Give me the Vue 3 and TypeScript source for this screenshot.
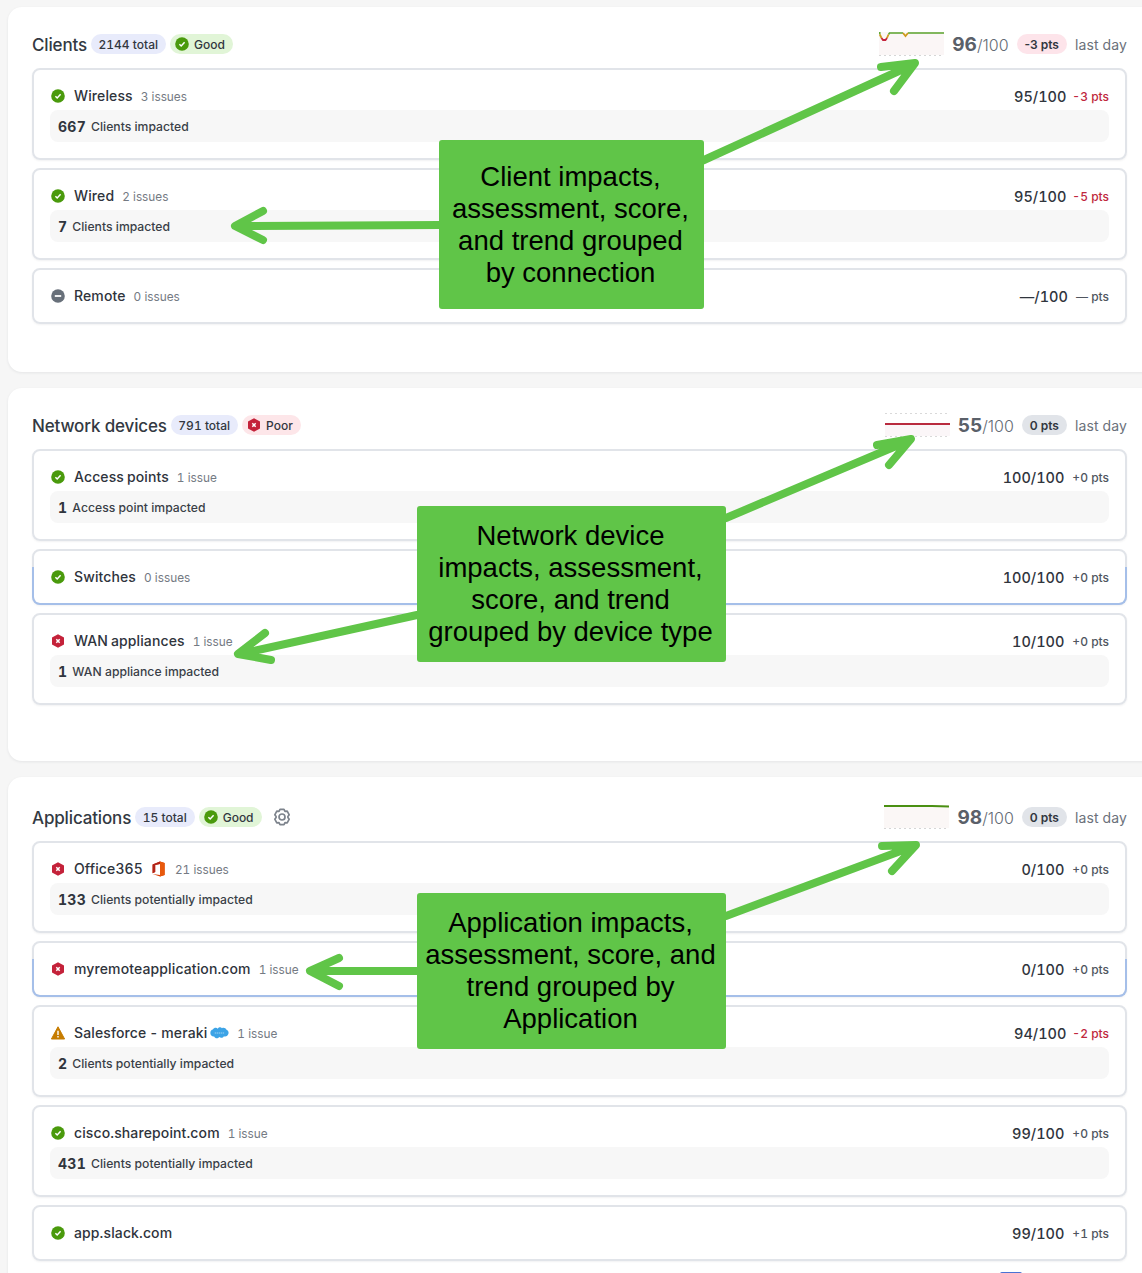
<script setup lang="ts">
type Status = 'good' | 'poor' | 'warn' | 'none';

interface Row {
  name: string;
  status: Status;
  issues: string;
  score: string;
  pts: string;
  ptsBad?: boolean;
  impactNum?: string;
  impactText?: string;
  brand?: 'office' | 'salesforce';
  focused?: boolean;
}

interface Section {
  title: string;
  total: string;
  status: 'good' | 'poor';
  score: string;
  change: string;
  changeBad?: boolean;
  trend: 'clients' | 'devices' | 'apps';
  gear?: boolean;
  tail: number;
  rows: Row[];
}

const sections: Section[] = [
  {
    title: 'Clients',
    total: '2144 total',
    status: 'good',
    score: '96',
    change: '-3 pts',
    changeBad: true,
    trend: 'clients',
    tail: 48,
    rows: [
      { name: 'Wireless', status: 'good', issues: '3 issues', score: '95/100', pts: '-3 pts', ptsBad: true, impactNum: '667', impactText: 'Clients impacted' },
      { name: 'Wired', status: 'good', issues: '2 issues', score: '95/100', pts: '-5 pts', ptsBad: true, impactNum: '7', impactText: 'Clients impacted' },
      { name: 'Remote', status: 'none', issues: '0 issues', score: '—/100', pts: '— pts' },
    ],
  },
  {
    title: 'Network devices',
    total: '791 total',
    status: 'poor',
    score: '55',
    change: '0 pts',
    trend: 'devices',
    tail: 56,
    rows: [
      { name: 'Access points', status: 'good', issues: '1 issue', score: '100/100', pts: '+0 pts', impactNum: '1', impactText: 'Access point impacted' },
      { name: 'Switches', status: 'good', issues: '0 issues', score: '100/100', pts: '+0 pts', focused: true },
      { name: 'WAN appliances', status: 'poor', issues: '1 issue', score: '10/100', pts: '+0 pts', impactNum: '1', impactText: 'WAN appliance impacted' },
    ],
  },
  {
    title: 'Applications',
    total: '15 total',
    status: 'good',
    score: '98',
    change: '0 pts',
    trend: 'apps',
    gear: true,
    tail: 56,
    rows: [
      { name: 'Office365', status: 'poor', brand: 'office', issues: '21 issues', score: '0/100', pts: '+0 pts', impactNum: '133', impactText: 'Clients potentially impacted' },
      { name: 'myremoteapplication.com', status: 'poor', issues: '1 issue', score: '0/100', pts: '+0 pts', focused: true },
      { name: 'Salesforce - meraki', status: 'warn', brand: 'salesforce', issues: '1 issue', score: '94/100', pts: '-2 pts', ptsBad: true, impactNum: '2', impactText: 'Clients potentially impacted' },
      { name: 'cisco.sharepoint.com', status: 'good', issues: '1 issue', score: '99/100', pts: '+0 pts', impactNum: '431', impactText: 'Clients potentially impacted' },
      { name: 'app.slack.com', status: 'good', issues: '', score: '99/100', pts: '+1 pts' },
    ],
  },
];

const notes = [
  { cls: 'note-clients', lines: ['Client impacts,', 'assessment, score,', 'and trend grouped', 'by connection'] },
  { cls: 'note-devices', lines: ['Network device', 'impacts, assessment,', 'score, and trend', 'grouped by device type'] },
  { cls: 'note-apps', lines: ['Application impacts,', 'assessment, score, and', 'trend grouped by', 'Application'] },
];

// shaft + two barbs for each annotation arrow
const arrows = [
  'M704 160 L912 65 M881 67 L915 63 L894 91',
  'M440 225 L237 226 M263 211 L235 226 L263 240',
  'M726 518 L908 441 M877 445 L911 439 L889 465',
  'M417 615 L240 654 M265 633 L238 654 L271 660',
  'M726 916 L914 846 M882 846 L916 845 L892 871',
  'M417 971 L312 971 M339 958 L310 971 L339 986',
];
</script>

<template>
  <div class="page">
    <section
      v-for="s in sections"
      :key="s.title"
      class="card"
      :style="{ paddingBottom: `${s.tail}px` }"
    >
      <header class="head" :class="{ 'head-tall': s.gear }">
        <h2 class="title">{{ s.title }}</h2>
        <span class="pill pill-total">{{ s.total }}</span>
        <span class="pill" :class="s.status === 'good' ? 'pill-good' : 'pill-poor'">
          <svg class="ico" viewBox="0 0 14 14">
            <template v-if="s.status === 'good'">
              <circle cx="7" cy="7" r="6.8" fill="#4a9a0c" />
              <path d="M4.4 7.2 L6.2 9 L9.6 5.3" fill="none" stroke="#fff" stroke-width="1.5" />
            </template>
            <template v-else>
              <path d="M7 .2 L13 3.5 V10.5 L7 13.8 L1 10.5 V3.5 Z" fill="#c4223a" />
              <path d="M5.3 5.3 L8.7 8.7 M8.7 5.3 L5.3 8.7" stroke="#fff" stroke-width="1.5" />
            </template>
          </svg>
          {{ s.status === 'good' ? 'Good' : 'Poor' }}
        </span>
        <svg v-if="s.gear" class="gear" viewBox="0 0 18 18" fill="none" stroke="#7d838c" stroke-width="1.7">
          <path d="M7 1.4 H11 L12 3.4 L14.2 3.2 L16.2 6.8 L14.9 8.5 V9.5 L16.2 11.2 L14.2 14.8 L12 14.6 L11 16.6 H7 L6 14.6 L3.8 14.8 L1.8 11.2 L3.1 9.5 V8.5 L1.8 6.8 L3.8 3.2 L6 3.4 Z" stroke-linejoin="round" />
          <circle cx="9" cy="9" r="3" />
        </svg>

        <div class="summary">
          <svg class="trend" viewBox="0 0 65 24">
            <template v-if="s.trend === 'clients'">
              <rect x="0" y="0" width="65" height="23" fill="#fbf6f6" />
              <path d="M0 23.5 H65" stroke="#d6d6d6" stroke-dasharray="2 3" />
              <path d="M.8 0 V2.5 M9.5 2.5 L10.5 1 H24 M29 1 H65" fill="none" stroke="#5ba32c" stroke-width="1.5" />
              <path d="M.8 2.5 L2.5 6 M8 6 L9.5 2.5 M24 1 L26.5 4 L29 1" fill="none" stroke="#cf9a1c" stroke-width="1.8" />
              <path d="M2.5 6 L4 8 H6.5 L8 6" fill="none" stroke="#c4223a" stroke-width="1.8" />
            </template>
            <template v-else-if="s.trend === 'devices'">
              <rect x="0" y="11" width="65" height="12" fill="#fbf6f8" />
              <path d="M0 .5 H65 M0 23.5 H65" stroke="#d9d9d9" stroke-dasharray="2 3" />
              <path d="M0 11 H65" stroke="#b92b3f" stroke-width="2" />
            </template>
            <template v-else>
              <rect x="0" y="0" width="65" height="23" fill="#fbf7f6" />
              <path d="M0 23.5 H65" stroke="#d6d6d6" stroke-dasharray="2 3" />
              <path d="M0 1 H48 L65 1.6" fill="none" stroke="#4a9012" stroke-width="2" />
            </template>
          </svg>
          <span class="big"><b>{{ s.score }}</b>/100</span>
          <span class="pill pill-change" :class="{ 'pill-drop': s.changeBad }">{{ s.change }}</span>
          <span class="range">last day</span>
        </div>
      </header>

      <div class="rows">
        <article v-for="r in s.rows" :key="r.name" class="row" :class="{ 'row-full': r.impactNum, 'row-focus': r.focused }">
          <div class="row-top">
            <svg class="ico" viewBox="0 0 14 14">
              <template v-if="r.status === 'good'">
                <circle cx="7" cy="7" r="6.8" fill="#4a9a0c" />
                <path d="M4.4 7.2 L6.2 9 L9.6 5.3" fill="none" stroke="#fff" stroke-width="1.5" />
              </template>
              <template v-else-if="r.status === 'poor'">
                <path d="M7 .2 L13 3.5 V10.5 L7 13.8 L1 10.5 V3.5 Z" fill="#c4223a" />
                <path d="M5.3 5.3 L8.7 8.7 M8.7 5.3 L5.3 8.7" stroke="#fff" stroke-width="1.5" />
              </template>
              <template v-else-if="r.status === 'warn'">
                <path d="M7 .8 L13.6 13 H.4 Z" fill="#c67c00" stroke="#c67c00" stroke-linejoin="round" />
                <path d="M7 4.8 V9 M7 10 V11.6" stroke="#fff" stroke-width="1.4" />
              </template>
              <template v-else>
                <circle cx="7" cy="7" r="6.8" fill="#68707a" />
                <path d="M3.8 7 H10.2" stroke="#fff" stroke-width="1.8" />
              </template>
            </svg>
            <span class="name">{{ r.name }}</span>
            <svg v-if="r.brand === 'office'" class="brand-office" viewBox="0 0 13 16">
              <path d="M8 .4 L12.6 2 V14 L8 15.6 L.6 13 L8 13.9 V2.9 L3.2 4 V11 L.6 12.2 V3.6 Z" fill="#d83b01" />
              <path d="M8 .4 L12.6 2 V14 L8 15.6 Z" fill="#e8590c" />
              <path d="M.6 3.6 L8 .4 V2.9 L3.2 4 V11 L.6 12.2 Z" fill="#b1231a" />
            </svg>
            <svg v-else-if="r.brand === 'salesforce'" class="brand-sf" viewBox="0 0 20 14">
              <path d="M8.2 2.4 C9.2 .8 11.4 .5 12.6 1.9 C14.2 1 16.6 1.6 17.4 3.6 C19.4 4.2 20.2 6.8 19 8.6 C18.4 10.4 16.2 11.2 14.6 10.4 C13.8 12.2 11 12.6 9.8 11.2 C8.2 13.2 5.2 12.8 4.4 10.6 C2.2 11 .2 9.2 .4 7 C.2 5.2 1.6 3.6 3 3.4 C4 1.4 6.8 1 8.2 2.4 Z" fill="#3ca3e6" />
              <path d="M5 7 H15" stroke="#bfe2f8" stroke-width=".8" stroke-dasharray="1.5 .6" />
            </svg>
            <span v-if="r.issues" class="issues">{{ r.issues }}</span>
            <span class="row-score">{{ r.score }}</span>
            <span class="row-pts" :class="{ bad: r.ptsBad }">{{ r.pts }}</span>
          </div>
          <div v-if="r.impactNum" class="impact">
            <b>{{ r.impactNum }}</b>
            <span>{{ r.impactText }}</span>
          </div>
        </article>
      </div>
      <div v-if="s.gear" class="more"></div>
    </section>

    <!-- callouts laid over the screenshot -->
    <svg class="arrows" viewBox="0 0 1142 1273">
      <path v-for="d in arrows" :key="d" :d="d" />
    </svg>
    <div v-for="n in notes" :key="n.cls" class="note" :class="n.cls">
      <span v-for="l in n.lines" :key="l">{{ l }}</span>
    </div>
  </div>
</template>

<style scoped>
.page {
  position: relative;
  box-sizing: border-box;
  width: 1142px;
  height: 1273px;
  overflow: hidden;
  padding: 7px 0 0 8px;
  display: flex;
  flex-direction: column;
  gap: 16px;
  background: #f6f6f6;
  font-family: Inter, "Liberation Sans", sans-serif;
  font-variant-numeric: tabular-nums;
  color: #2f343c;
}

.card {
  flex: none;
  width: 1150px;
  box-sizing: border-box;
  padding: 24px 0 0 24px;
  background: #fff;
  border-radius: 14px;
  box-shadow: 0 1px 3px rgba(30, 40, 50, 0.08);
}

.head {
  display: flex;
  align-items: center;
  width: 1095px;
  height: 26px;
  margin-bottom: 11px;
}

.head-tall {
  height: 32px;
  margin-bottom: 8px;
}

.title {
  margin: 1px 4px 0 0;
  font-size: 17px;
  font-weight: 500;
  letter-spacing: -0.15px;
  color: #333942;
}

.pill {
  display: inline-flex;
  align-items: center;
  gap: 5px;
  height: 20px;
  margin-right: 4px;
  padding: 0 8px 0 7.5px;
  border-radius: 10px;
  font-size: 12px;
  font-weight: 500;
  color: #32373f;
}

.pill-total {
  background: #e8ebfb;
}

.pill-good {
  padding-left: 5px;
  background: #e1f5d7;
}

.pill-poor {
  padding-left: 5px;
  background: #fde6e9;
}

.ico {
  flex: none;
  width: 14px;
  height: 14px;
}

.gear {
  width: 18px;
  height: 18px;
  margin-left: 7px;
}

.summary {
  display: flex;
  align-items: center;
  margin-left: auto;
  gap: 8px;
}

.trend {
  width: 65px;
  height: 24px;
}

.big {
  font-size: 16px;
  font-variant-numeric: normal;
  color: #646b75;
  font-weight: 300;
}

.big b {
  font-size: 19px;
  font-weight: 700;
  color: #5a6069;
}

.pill-change {
  margin: 0;
  background: #e1e4e9;
  font-variant-numeric: normal;
  font-weight: 600;
  padding: 0 8px;
}

.pill-drop {
  background: #fde4ea;
}

.range {
  font-size: 14px;
  letter-spacing: 0.12px;
  color: #6b717b;
}

.rows {
  display: flex;
  flex-direction: column;
  gap: 8px;
  width: 1095px;
}

.row {
  position: relative;
  box-sizing: border-box;
  padding: 14px 16px;
  border: 2px solid #e1e4e9;
  border-radius: 8px;
  box-shadow: 0 1px 2px rgba(30, 40, 50, 0.06);
}

.row-full {
  padding-bottom: 16px;
}

/* hovered row: lower half of the outline turns blue */
.row-focus::after {
  content: "";
  position: absolute;
  left: -2px;
  right: -2px;
  top: 16px;
  bottom: -2px;
  border: 2px solid #a5bfe9;
  border-top: 0;
  border-radius: 0 0 8px 8px;
}

.row-top {
  display: flex;
  align-items: center;
  height: 24px;
  margin-bottom: 0;
  padding-left: 1px;
}

.row-full .row-top {
  margin-bottom: 2px;
}

.name {
  margin-left: 9px;
  margin-top: -1px;
  font-size: 14px;
  font-weight: 500;
  letter-spacing: 0.12px;
  word-spacing: -1px;
  color: #2f343c;
}

.brand-office {
  width: 13px;
  height: 16px;
  margin: 0 2px 0 9px;
}

.brand-sf {
  width: 19px;
  height: 14px;
  margin-left: 3px;
}

.issues {
  margin-left: 8px;
  margin-top: 2px;
  font-size: 11.8px;
  color: #747a83;
}

.row-score {
  margin-left: auto;
  font-size: 14.5px;
  font-weight: 500;
  color: #30353d;
}

.row-pts {
  margin-left: 8px;
  font-size: 12px;
  font-weight: 500;
  color: #50565f;
}

.row-pts.bad {
  margin-left: 6px;
  color: #c0283e;
}

.impact {
  display: flex;
  align-items: center;
  gap: 5px;
  height: 32px;
  padding-left: 8px;
  background: #f7f7f7;
  border-radius: 8px;
  font-size: 12.2px;
  font-weight: 500;
  color: #3a3f47;
}

.impact b {
  font-size: 14px;
  font-weight: 700;
  letter-spacing: 0.3px;
  color: #30353d;
}

.more {
  width: 22px;
  height: 20px;
  margin: 11px 0 0 968px;
  border-radius: 2px;
  background: #4a72d4;
}

.arrows {
  position: absolute;
  left: 0;
  top: 0;
  width: 1142px;
  height: 1273px;
  fill: none;
  stroke: #60c548;
  stroke-width: 8;
  stroke-linecap: round;
  stroke-linejoin: round;
}

.note {
  position: absolute;
  box-sizing: border-box;
  display: flex;
  flex-direction: column;
  align-items: center;
  justify-content: center;
  padding-right: 2px;
  background: #60c548;
  border-radius: 3px;
  font-family: "Liberation Sans", Arial, sans-serif;
  font-size: 27.5px;
  line-height: 32px;
  color: #000;
  white-space: nowrap;
}

.note-clients {
  left: 439px;
  top: 140px;
  width: 265px;
  height: 169px;
}

.note-devices {
  left: 417px;
  top: 506px;
  width: 309px;
  height: 156px;
}

.note-apps {
  left: 417px;
  top: 893px;
  width: 309px;
  height: 156px;
}
</style>

<style>
body {
  margin: 0;
  background: #f6f6f6;
}
</style>
